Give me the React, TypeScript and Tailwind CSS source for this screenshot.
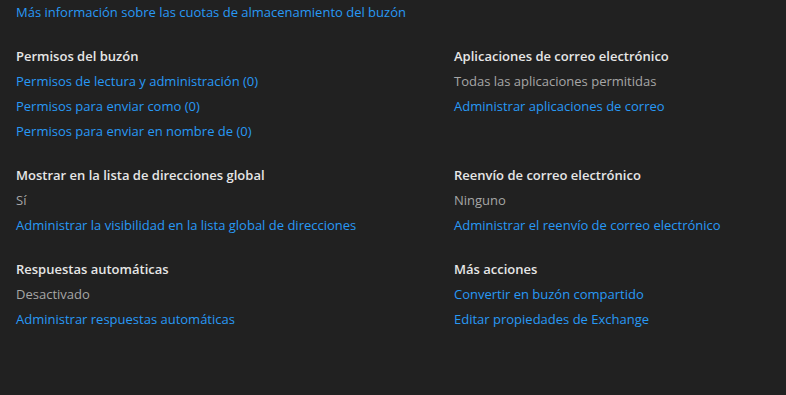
import React from "react";

type Section = {
  title: string;
  value?: string;
  links: string[];
};

const rows: [Section, Section | null][] = [
  [
    {
      title: "Permisos del buzón",
      links: [
        "Permisos de lectura y administración (0)",
        "Permisos para enviar como (0)",
        "Permisos para enviar en nombre de (0)",
      ],
    },
    {
      title: "Aplicaciones de correo electrónico",
      value: "Todas las aplicaciones permitidas",
      links: ["Administrar aplicaciones de correo"],
    },
  ],
  [
    {
      title: "Mostrar en la lista de direcciones global",
      value: "Sí",
      links: ["Administrar la visibilidad en la lista global de direcciones"],
    },
    {
      title: "Reenvío de correo electrónico",
      value: "Ninguno",
      links: ["Administrar el reenvío de correo electrónico"],
    },
  ],
  [
    {
      title: "Respuestas automáticas",
      value: "Desactivado",
      links: ["Administrar respuestas automáticas"],
    },
    {
      title: "Más acciones",
      links: ["Convertir en buzón compartido", "Editar propiedades de Exchange"],
    },
  ],
];

function Block({ section }: { section: Section }) {
  return (
    <div className="flex flex-col">
      <div className="h-[25px] leading-[25px] font-semibold text-[#e6e6e6]">
        {section.title}
      </div>
      {section.value && (
        <div className="h-[25px] leading-[25px] text-[#a6a6a6]">{section.value}</div>
      )}
      {section.links.map((l) => (
        <a key={l} href="#" className="h-[25px] leading-[25px] text-[#2899f5] hover:underline">
          {l}
        </a>
      ))}
    </div>
  );
}

export default function App() {
  return (
    <div
      className="w-[786px] h-[395px] bg-[#212121] px-4 text-[13px]"
      style={{ fontFamily: '"Open Sans", "Noto Sans", sans-serif' }}
    >
      <a href="#" className="block h-[25px] leading-[25px] text-[#2899f5]">
        Más información sobre las cuotas de almacenamiento del buzón
      </a>
      <div className="mt-[19px] flex flex-col gap-[19px]">
        {rows.map(([a, b], i) => (
          <div key={i} className="grid grid-cols-[438px_1fr]">
            <Block section={a} />
            {b && <Block section={b} />}
          </div>
        ))}
      </div>
    </div>
  );
}
